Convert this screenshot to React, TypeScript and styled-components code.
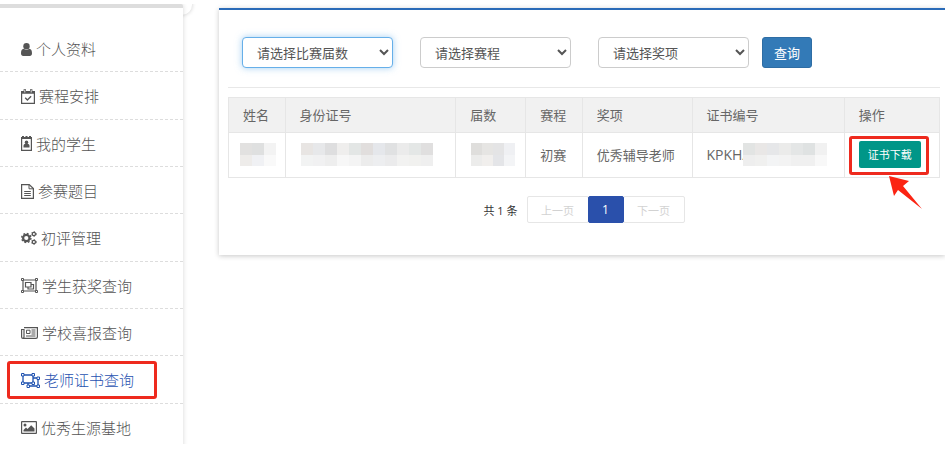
import React from "react";
import styled, { createGlobalStyle, css } from "styled-components";

const GlobalStyle = createGlobalStyle`
  *, *::before, *::after { box-sizing: border-box; }
  html, body { margin: 0; background: #fff; overflow: hidden; }
  body, button, select {
    font-family: "Open Sans", "Noto Sans CJK SC", sans-serif;
    font-size: 13px;
    color: #666;
  }
`;

const Page = styled.div`
  display: flex;
  align-items: flex-start;
  padding-top: 4px;
`;

const SidebarClip = styled.div`
  position: relative;
  flex: 0 0 200px;
  height: 440px;
  overflow: hidden;
`;

const Sidebar = styled.aside`
  position: relative;
  width: 183px;
  padding-top: 17px;
  border-top: 4px solid #ddd;
  border-top-right-radius: 2px;
  background: #fff;
  box-shadow: 0 0 5px rgba(0, 0, 0, 0.16);
`;

const Knob = styled.span`
  position: absolute;
  top: -9px;
  right: 8px;
  width: 20px;
  height: 20px;
  border-radius: 50%;
  background: #fff;
  box-shadow: 0 0 4px rgba(0, 0, 0, 0.2);
`;

const Menu = styled.ul`
  display: grid;
  grid-auto-rows: 1fr;
  min-height: 426px;
  margin: 0;
  padding: 0;
  list-style: none;
`;

const MenuItem = styled.li`
  position: relative;
  display: flex;
  border-bottom: 1px dashed #ddd;
`;

const MenuLink = styled.a<{ $active?: boolean }>`
  display: flex;
  flex: 1;
  align-items: center;
  gap: 4px;
  padding: 2px 0 0 21px;
  font-size: 15px;
  font-weight: 300;
  line-height: 20px;
  color: ${(p) => (p.$active ? "#1f52b0" : "#555")};
  text-decoration: none;

  svg { display: block; flex: none; }
`;

const frame = css`
  position: absolute;
  border: 3px solid #ee2a1e;
  border-radius: 3px;
  pointer-events: none;
`;

const MenuFrame = styled.span`
  ${frame}
  inset: 5px 26px 4px 7px;
`;

const Card = styled.main`
  flex: 1;
  min-width: 0;
  margin: 4px 0 0 19px;
  padding: 27px 5px 32px 9px;
  border-top: 2px solid #2a6bb8;
  background: #fff;
  box-shadow: 0 1px 5px rgba(0, 0, 0, 0.22);
`;

const Filters = styled.form`
  display: flex;
  align-items: center;
  gap: 27px;
  padding: 0 14px 19px;
  border-bottom: 1px solid #e8e8e8;
`;

const Select = styled.select<{ $focused?: boolean }>`
  width: 151px;
  height: 31px;
  padding: 0 0 0 10px;
  border: 1px solid ${(p) => (p.$focused ? "#66afe9" : "#ccc")};
  border-radius: 4px;
  background: #fff;
  color: #555;
  outline: none;
  box-shadow: ${(p) => (p.$focused ? "0 0 7px rgba(102, 175, 233, 0.6)" : "none")};
`;

const SearchButton = styled.button`
  height: 31px;
  margin-left: -14px;
  padding: 0 11px;
  border: 1px solid #2e6da4;
  border-radius: 3px;
  background: #337ab7;
  color: #fff;
`;

const Table = styled.table`
  width: 100%;
  margin-top: 9px;
  border-collapse: collapse;
  table-layout: fixed;
`;

const Col = styled.col<{ $w?: number }>`
  width: ${(p) => (p.$w ? `${p.$w}%` : "auto")};
`;

const Th = styled.th`
  height: 35px;
  padding: 0 14px 2px;
  border: 1px solid #e6e6e6;
  background: #f1f1f1;
  font-weight: 400;
  text-align: left;
`;

const Td = styled.td`
  position: relative;
  height: 45px;
  padding: 0 14px 2px;
  border: 1px solid #e6e6e6;
  white-space: nowrap;
`;

const CodeCell = styled.div`
  display: flex;
  align-items: center;
  font-size: 14px;
`;

const MosaicSvg = styled.svg<{ $shift: number }>`
  display: block;
  position: relative;
  flex: none;
  margin-left: ${(p) => p.$shift}px;
`;

const DownloadButton = styled.button`
  display: block;
  height: 27px;
  padding: 0 9px;
  border: 0;
  border-radius: 2px;
  background: #009688;
  color: #fff;
  font-size: 11px;
`;

const DownloadFrame = styled.span`
  ${frame}
  top: 3px;
  left: 4px;
  width: 80px;
  height: 39px;
`;

const Arrow = styled.svg`
  position: absolute;
  top: 43px;
  left: 43px;
  z-index: 1;
`;

const Pager = styled.nav`
  display: flex;
  justify-content: center;
  align-items: center;
  margin-top: 18px;
  font-size: 11px;
`;

const Total = styled.span`
  margin-right: 10px;
  color: #333;
`;

const PageButton = styled.button<{ $current?: boolean }>`
  position: relative;
  z-index: ${(p) => (p.$current ? 1 : 0)};
  width: ${(p) => (p.$current ? 36 : 62)}px;
  height: 27px;
  margin-left: -1px;
  padding: 0;
  border: 1px solid ${(p) => (p.$current ? "#2a50ab" : "#e6e6e6")};
  border-radius: 2px;
  background: ${(p) => (p.$current ? "#2a50ab" : "#fff")};
  color: ${(p) => (p.$current ? "#fff" : "#d2d2d2")};
  font-size: ${(p) => (p.$current ? 12 : 11)}px;
`;

const UserIcon = () => (
  <svg width="11" height="13" viewBox="0 0 11 13" fill="currentColor">
    <circle cx="5.500" cy="3.300" r="3.200" />
    <path d="M2.700 5.800C.8 6 0 7.700 0 10.300 0 12 .9 13 2.200 13h6.600c1.300 0 2.200-1 2.200-2.700 0-2.600-.8-4.300-2.700-4.500-1.600 1.500-4 1.500-5.600 0z" />
  </svg>
);

const CalendarIcon = () => (
  <svg width="14" height="15" viewBox="0 0 14 15" fill="none" stroke="currentColor">
    <path d="M.6 2.600h12.800v11.800H.6z" strokeWidth="1.200" />
    <path d="M1 3.500h12" strokeWidth="2.500" />
    <path d="M3.800.300v3.500M10.200.300v3.500" strokeWidth="2.400" />
    <path d="M3.800 1v2.500M10.200 1v2.500" stroke="#fff" strokeWidth=".8" />
    <path d="m4.200 8.800 2.200 2.200 3.700-3.800" strokeWidth="1.300" />
  </svg>
);

const CogsIcon = () => (
  <svg width="16" height="14" viewBox="0 0 16 14" fill="none" stroke="currentColor">
    <circle cx="5.300" cy="7" r="3.200" strokeWidth="2.200" />
    <circle cx="5.300" cy="7" r="4.600" strokeWidth="1.400" strokeDasharray="1.800 1.813" />
    <circle cx="12.900" cy="3" r="1.600" strokeWidth="1.200" />
    <circle cx="12.900" cy="3" r="2.400" strokeWidth=".9" strokeDasharray="1.250 1.263" />
    <circle cx="12.900" cy="11" r="1.600" strokeWidth="1.200" />
    <circle cx="12.900" cy="11" r="2.400" strokeWidth=".9" strokeDasharray="1.250 1.263" />
  </svg>
);

const BadgeIcon = () => (
  <svg width="11" height="15" viewBox="0 0 11 15" fill="currentColor">
    <path fillRule="evenodd" d="M1 0h2v1h1.500V0h2v1H8V0h2v1h1v14H0V1h1zM1.200 3v10.800h8.600V3z" />
    <circle cx="5.500" cy="6.400" r="1.800" />
    <path d="M2.500 11.500V10c0-1.400.8-2 1.700-2h2.600c.9 0 1.700.6 1.700 2v1.500z" />
  </svg>
);

const FileIcon = () => (
  <svg width="13" height="15" viewBox="0 0 13 15" fill="none" stroke="currentColor">
    <path d="M.6.600h7.600l4.200 4v9.800H.6z" strokeWidth="1.200" />
    <path d="M8 .600v4.200h4.300M3.200 7.500h6.600M3.200 9.500h6.600M3.200 11.500h6.600" />
  </svg>
);

const GroupIcon = () => (
  <svg width="17" height="15" viewBox="0 0 17 15" fill="none" stroke="currentColor">
    <path d="M2 2h13v11H2z" strokeWidth="1.200" />
    <path d="M4.500 4.500h5.500v4.500H4.500zM10 6.500h2.500v4.500H7V9" strokeWidth="1.200" />
    <path d="M.5.500h2v2h-2zM14.500.500h2v2h-2zM.5 12.500h2v2h-2zM14.500 12.500h2v2h-2z" fill="#fff" />
  </svg>
);

const UngroupIcon = () => (
  <svg width="19" height="15" viewBox="0 0 19 15" fill="none" stroke="currentColor">
    <path d="M2 2h10v8H2zM12 5h5v8H7v-3" strokeWidth="1.300" />
    <path d="M.5.500h2.500v2.500H.5zM11 .500h2.500v2.500H11zM.5 9h2.500v2.500H.5zM11 9h2.500v2.500H11zM16 4h2.500v2.500H16zM16 12h2.500v2.500H16zM6 12h2.500v2.500H6z" fill="#fff" />
  </svg>
);

const NewsIcon = () => (
  <svg width="17" height="12" viewBox="0 0 17 12" fill="none" stroke="currentColor">
    <path d="M3 .600h13.400v9.400q0 1.400-1.400 1.400H2Q.6 11.400.6 10V2.500H3V10q0 1.400-1.200 1.400" strokeWidth="1.200" />
    <path d="M5.500 3.200h3.500v3.300H5.500zM10.500 3h4M10.500 5h4M10.500 7h4M5 9h9.500" />
  </svg>
);

const ImageIcon = () => (
  <svg width="16" height="13" viewBox="0 0 16 13" fill="currentColor">
    <path fillRule="evenodd" d="M1 0h14q1 0 1 1v11q0 1-1 1H1q-1 0-1-1V1q0-1 1-1zM1.200 1.200v10.600h13.600V1.200z" />
    <circle cx="4" cy="4" r="1.500" />
    <path d="M2.500 10.500V9L5 6.500l1.500 1.500 3.700-3.800L13.500 7.500v3z" />
  </svg>
);

type MosaicProps = { cell: number; rows: string[][]; shift?: number };

const Mosaic = ({ cell, rows, shift = 0 }: MosaicProps) => (
  <MosaicSvg $shift={shift} width={cell * rows[0].length} height={23} shapeRendering="crispEdges" aria-hidden="true">
    {rows.map((row, r) =>
      row.map((fill, c) => (
        <rect key={`${r}-${c}`} x={c * cell} y={r * 12} width={cell} height={12} fill={fill} />
      ))
    )}
  </MosaicSvg>
);

const menu = [
  { label: "个人资料", icon: <UserIcon /> },
  { label: "赛程安排", icon: <CalendarIcon /> },
  { label: "我的学生", icon: <BadgeIcon /> },
  { label: "参赛题目", icon: <FileIcon /> },
  { label: "初评管理", icon: <CogsIcon /> },
  { label: "学生获奖查询", icon: <GroupIcon /> },
  { label: "学校喜报查询", icon: <NewsIcon /> },
  { label: "老师证书查询", icon: <UngroupIcon />, active: true },
  { label: "优秀生源基地", icon: <ImageIcon /> },
];

const filters = ["请选择比赛届数", "请选择赛程", "请选择奖项"];
const headers = ["姓名", "身份证号", "届数", "赛程", "奖项", "证书编号", "操作"];
const widths = [7.95, 24, 9.85, 7.95, 15.45, 21.4, undefined];

export default function App() {
  return (
    <>
      <GlobalStyle />
      <Page>
        <SidebarClip>
          <Knob />
          <Sidebar>
            <Menu>
              {menu.map((m) => (
                <MenuItem key={m.label}>
                  <MenuLink href="#" $active={m.active}>
                    {m.icon}
                    {m.label}
                  </MenuLink>
                  {m.active && <MenuFrame />}
                </MenuItem>
              ))}
            </Menu>
          </Sidebar>
        </SidebarClip>
        <Card>
          <Filters>
            {filters.map((f, i) => (
              <Select key={f} $focused={i === 0} aria-label={f}>
                <option>{f}</option>
              </Select>
            ))}
            <SearchButton type="button">查询</SearchButton>
          </Filters>
          <Table>
            <colgroup>
              {widths.map((w, i) => (
                <Col key={i} $w={w} />
              ))}
            </colgroup>
            <thead>
              <tr>
                {headers.map((h) => (
                  <Th key={h}>{h}</Th>
                ))}
              </tr>
            </thead>
            <tbody>
              <tr>
                <Td>
                  <Mosaic cell={12} shift={-3} rows={[["#e2e1e0", "#dfe0e0", "#f3f3f3"], ["#eeecea", "#f0f1f4", "#f9f9f9"]]} />
                </Td>
                <Td>
                  <Mosaic
                    cell={12}
                    shift={1}
                    rows={[
                      ["#e8e5e3", "#e7e8ea", "#dededf", "#efeeed", "#e3e6e5", "#e1dedd", "#e5e7eb", "#e0e1e2", "#ebebeb", "#e4e7e6", "#e0dfdf"],
                      ["#f2f3f3", "#f1f1f2", "#eeeeee", "#f7f7f7", "#f4f4f4", "#ececec", "#edeef0", "#ebebec", "#f2f2f1", "#f1f1ef", "#efefef"],
                    ]}
                  />
                </Td>
                <Td>
                  <Mosaic cell={11} shift={1} rows={[["#dfdedc", "#e6e5e3", "#e4e4e5", "#eff0f3"], ["#ececeb", "#f1efed", "#e4e5e8", "#f3f4f6"]]} />
                </Td>
                <Td>初赛</Td>
                <Td>优秀辅导老师</Td>
                <Td>
                  <CodeCell>
                    KPKHA
                    <Mosaic
                      cell={12}
                      shift={-8}
                      rows={[
                        ["#e2e4e3", "#e9e7e6", "#e6e7e9", "#ebebea", "#e4e6e6", "#dfe2e2", "#f1f1f1"],
                        ["#eeeeee", "#f0f0ef", "#f3f4f5", "#f3f3f3", "#f0f0f0", "#f0f0f0", "#f8f8f8"],
                      ]}
                    />
                  </CodeCell>
                </Td>
                <Td>
                  <DownloadButton type="button">证书下载</DownloadButton>
                  <DownloadFrame />
                  <Arrow width="36" height="34" viewBox="0 0 36 34" fill="#fb2413" aria-hidden="true">
                    <path d="M1 0 21 5 15 10 34 33 10 14 6 20z" />
                  </Arrow>
                </Td>
              </tr>
            </tbody>
          </Table>
          <Pager aria-label="分页">
            <Total>共 1 条</Total>
            <PageButton type="button">上一页</PageButton>
            <PageButton type="button" $current>1</PageButton>
            <PageButton type="button">下一页</PageButton>
          </Pager>
        </Card>
      </Page>
    </>
  );
}
